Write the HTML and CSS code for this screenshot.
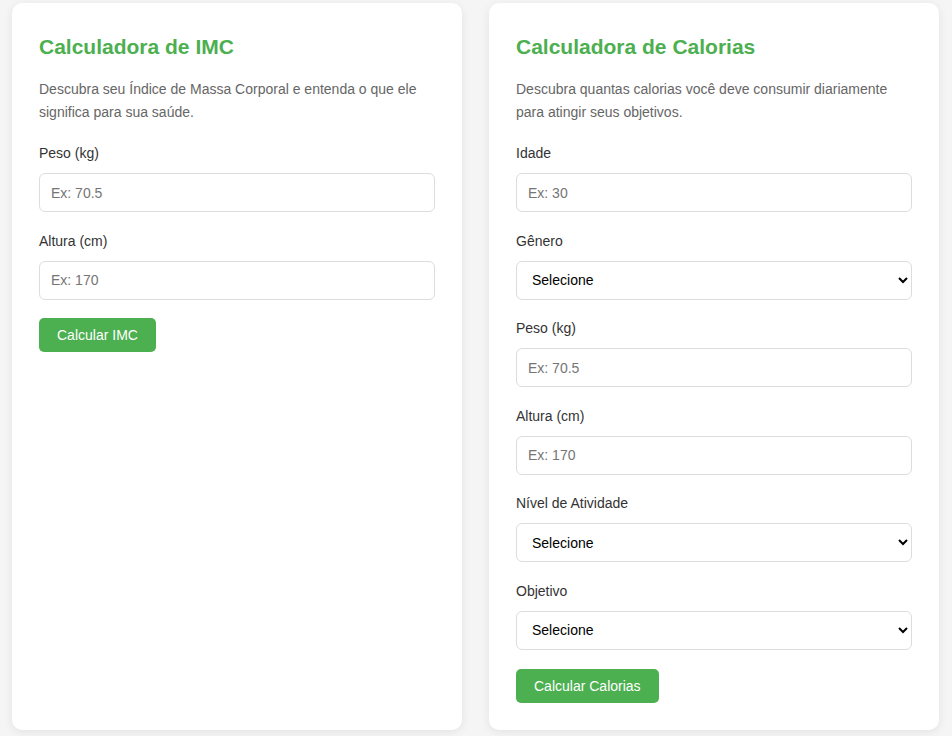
FILE: index.html
```html
<!DOCTYPE html>
<html lang="pt-BR">
<head>
<meta charset="utf-8">
<title>Calculadoras</title>
<link rel="stylesheet" href="styles.css">
</head>
<body>
<main class="grid">
  <section class="card">
    <h2 class="card-title">Calculadora de IMC</h2>
    <p class="card-desc">Descubra seu Índice de Massa Corporal e entenda o que ele significa para sua saúde.</p>
    <div class="field">
      <label class="field-label" for="imc-peso">Peso (kg)</label>
      <input class="field-input" id="imc-peso" type="text" placeholder="Ex: 70.5">
    </div>
    <div class="field">
      <label class="field-label" for="imc-altura">Altura (cm)</label>
      <input class="field-input" id="imc-altura" type="text" placeholder="Ex: 170">
    </div>
    <button class="btn" type="button">Calcular IMC</button>
  </section>
  <section class="card">
    <h2 class="card-title">Calculadora de Calorias</h2>
    <p class="card-desc">Descubra quantas calorias você deve consumir diariamente para atingir seus objetivos.</p>
    <div class="field">
      <label class="field-label" for="cal-idade">Idade</label>
      <input class="field-input" id="cal-idade" type="text" placeholder="Ex: 30">
    </div>
    <div class="field">
      <label class="field-label" for="cal-genero">Gênero</label>
      <select class="field-input field-select" id="cal-genero"><option>Selecione</option><option>Masculino</option><option>Feminino</option></select>
    </div>
    <div class="field">
      <label class="field-label" for="cal-peso">Peso (kg)</label>
      <input class="field-input" id="cal-peso" type="text" placeholder="Ex: 70.5">
    </div>
    <div class="field">
      <label class="field-label" for="cal-altura">Altura (cm)</label>
      <input class="field-input" id="cal-altura" type="text" placeholder="Ex: 170">
    </div>
    <div class="field">
      <label class="field-label" for="cal-atividade">Nível de Atividade</label>
      <select class="field-input field-select" id="cal-atividade"><option>Selecione</option></select>
    </div>
    <div class="field">
      <label class="field-label" for="cal-objetivo">Objetivo</label>
      <select class="field-input field-select" id="cal-objetivo"><option>Selecione</option></select>
    </div>
    <button class="btn" type="button">Calcular Calorias</button>
  </section>
</main>
</body>
</html>
```
FILE: styles.css
```css
* { box-sizing: border-box; }
body {
  margin: 0;
  background: #f5f5f5;
  font-family: "Liberation Sans", Arial, sans-serif;
  color: #333;
}
.grid {
  display: grid;
  grid-template-columns: 1fr 1fr;
  gap: 27px;
  padding: 3px 13px 6px 12px;
}
.card {
  background: #fff;
  border-radius: 10px;
  padding: 27px;
  box-shadow: 0 2px 10px rgba(0, 0, 0, 0.08);
}
.card-title {
  margin: 4px 0 0;
  font-size: 21px;
  font-weight: bold;
  color: #4caf50;
  line-height: 26px;
}
.card-desc {
  margin: 18px 0 19px;
  font-size: 14px;
  line-height: 23px;
  color: #666;
}
.field {
  margin-bottom: 18.6px;
}
.field-label {
  display: block;
  font-size: 14px;
  line-height: 20px;
  margin-bottom: 10px;
  color: #333;
}
.field-input {
  display: block;
  width: 100%;
  height: 39px;
  padding: 0 11px;
  border: 1px solid #ddd;
  border-radius: 6px;
  font-family: inherit;
  font-size: 14px;
  color: #333;
  background: #fff;
}
.field-input::placeholder { color: #757575; }
.field-select {
  color: #000;
}
.btn {
  display: inline-block;
  height: 34px;
  padding: 0 18px;
  border: none;
  border-radius: 5px;
  background: #4caf50;
  color: #fff;
  font-family: inherit;
  font-size: 14px;
  cursor: pointer;
}
```
